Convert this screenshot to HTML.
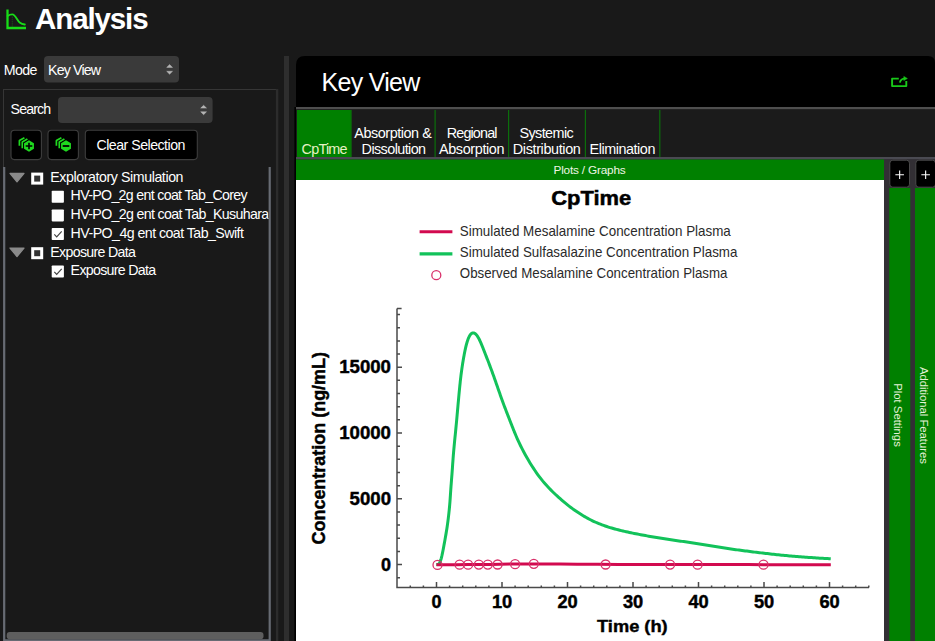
<!DOCTYPE html><html><head><meta charset="utf-8"><style>html,body{margin:0;padding:0;width:935px;height:641px;overflow:hidden;background:#191919}svg{display:block}text{font-family:"Liberation Sans",sans-serif;white-space:pre}</style></head><body>
<svg width="935" height="641" viewBox="0 0 935 641">
<rect width="935" height="641" fill="#191919"/>
<path d="M7.5 9.6 V28 H26" fill="none" stroke="#18dc18" stroke-width="2.3"/>
<path d="M7.6 16 C9 15 10.5 14.4 12.3 14.4 C15.5 14.4 17 20.5 20 22.8 C21.5 24 23 24.3 24.8 24.5" fill="none" stroke="#18dc18" stroke-width="1.9" stroke-linecap="round"/>
<path d="M12.3 16.5 V27" stroke="#14a014" stroke-width="1" stroke-dasharray="1.5 0.7" opacity="0.4"/>
<text x="35.1" y="29.2" font-size="29.5" fill="#fff" font-weight="bold" textLength="113.5" lengthAdjust="spacing" >Analysis</text>
<text x="3.75" y="75.0" font-size="14.2" fill="#fff" textLength="33.75" lengthAdjust="spacing" >Mode</text>
<rect x="44" y="56" width="135" height="26.5" rx="4" fill="#3a3a3a"/>
<text x="48.1" y="75.0" font-size="14.2" fill="#fff" textLength="52.9" lengthAdjust="spacing" >Key View</text>
<path d="M166.7 67.39999999999999 L169.6 64.6 L172.5 67.39999999999999 Z M166.7 71.3 L169.6 74.2 L172.5 71.3 Z" fill="#b4b4b4" stroke="#b4b4b4" stroke-width="0.5" stroke-linejoin="round"/>
<rect x="3.5" y="89.5" width="273.5" height="600" fill="none" stroke="#363636" stroke-width="1"/>
<rect x="275.9" y="89" width="2.4" height="552" fill="#2c2c2c"/>
<text x="10.6" y="114.2" font-size="14.2" fill="#fff" textLength="40.6" lengthAdjust="spacing" >Search</text>
<rect x="58" y="97" width="154.6" height="26" rx="4" fill="#3a3a3a"/>
<path d="M200.7 108.1 L203.6 105.3 L206.5 108.1 Z M200.7 111.8 L203.6 114.7 L206.5 111.8 Z" fill="#b4b4b4" stroke="#b4b4b4" stroke-width="0.5" stroke-linejoin="round"/>
<rect x="11" y="130.2" width="30.4" height="29.4" rx="3.5" fill="#000" stroke="#3e3e3e" stroke-width="1.1"/>
<rect x="48" y="130.2" width="30.4" height="29.4" rx="3.5" fill="#000" stroke="#3e3e3e" stroke-width="1.1"/>
<rect x="85.3" y="130.2" width="112" height="29.4" rx="3.5" fill="#000" stroke="#3e3e3e" stroke-width="1.1"/>
<text x="96.5" y="149.7" font-size="14.2" fill="#fff" textLength="88.9" lengthAdjust="spacing" >Clear Selection</text>
<polyline points="19.40,145.70 19.40,140.40 24.40,137.80" fill="none" stroke="#1fd81f" stroke-width="1.7" stroke-linejoin="bevel"/>
<polyline points="22.30,148.20 22.30,142.10 27.40,139.10" fill="none" stroke="#1fd81f" stroke-width="1.7" stroke-linejoin="bevel"/>
<polygon points="29.00,139.40 34.72,142.70 34.72,149.30 29.00,152.60 23.28,149.30 23.28,142.70" fill="#000"/>
<polygon points="29.00,140.30 33.94,143.15 33.94,148.85 29.00,151.70 24.06,148.85 24.06,143.15" fill="#1fd81f"/>
<path d="M25.7 146 H32.3 M29 142.7 V149.3" stroke="#000" stroke-width="1.6"/>
<polyline points="56.40,145.70 56.40,140.40 61.40,137.80" fill="none" stroke="#1fd81f" stroke-width="1.7" stroke-linejoin="bevel"/>
<polyline points="59.30,148.20 59.30,142.10 64.40,139.10" fill="none" stroke="#1fd81f" stroke-width="1.7" stroke-linejoin="bevel"/>
<polygon points="66.00,139.40 71.72,142.70 71.72,149.30 66.00,152.60 60.28,149.30 60.28,142.70" fill="#000"/>
<polygon points="66.00,140.30 70.94,143.15 70.94,148.85 66.00,151.70 61.06,148.85 61.06,143.15" fill="#1fd81f"/>
<path d="M62.7 146 H69.3" stroke="#000" stroke-width="1.8"/>
<path d="M4.2 167 V640.4 H269.7 V167" fill="none" stroke="#676b73" stroke-width="2.2"/>
<rect x="6.7" y="632" width="256.8" height="7.3" rx="3" fill="#5e5e5e"/>
<clipPath id="tc"><rect x="5" y="165" width="263.5" height="470"/></clipPath><g clip-path="url(#tc)">
<path d="M10 173.4 H24 L17 181.8 Z" fill="#8a8a8a" stroke="#8a8a8a" stroke-width="1.3" stroke-linejoin="round"/>
<rect x="31.2" y="172.6" width="12" height="12" fill="#fff"/><rect x="34.2" y="175.6" width="6" height="6" fill="#333"/>
<text x="50.3" y="182.3" font-size="14.2" fill="#fff" textLength="133.2" lengthAdjust="spacing" >Exploratory Simulation</text>
<rect x="51.7" y="190.7" width="12.2" height="12" rx="0.8" fill="#fff"/>
<text x="70.6" y="200.4" font-size="14.2" fill="#fff" textLength="177.0" lengthAdjust="spacing" >HV-PO_2g ent coat Tab_Corey</text>
<rect x="51.7" y="209.4" width="12.2" height="12" rx="0.8" fill="#fff"/>
<text x="70.6" y="219.1" font-size="14.2" fill="#fff" textLength="198.6" lengthAdjust="spacing" >HV-PO_2g ent coat Tab_Kusuhara</text>
<rect x="51.7" y="228.1" width="12.2" height="12" rx="0.8" fill="#fff"/>
<path d="M54.300000000000004 234.4 L56.7 236.9 L61.7 231.4" fill="none" stroke="#444" stroke-width="1.2"/>
<text x="70.6" y="237.8" font-size="14.2" fill="#fff" textLength="173.3" lengthAdjust="spacing" >HV-PO_4g ent coat Tab_Swift</text>
<path d="M10 248.1 H24 L17 256.5 Z" fill="#8a8a8a" stroke="#8a8a8a" stroke-width="1.3" stroke-linejoin="round"/>
<rect x="31.2" y="247.2" width="12" height="12" fill="#fff"/><rect x="34.2" y="250.2" width="6" height="6" fill="#333"/>
<text x="50.3" y="257.0" font-size="14.2" fill="#fff" textLength="85.6" lengthAdjust="spacing" >Exposure Data</text>
<rect x="51.7" y="265.5" width="12.2" height="12" rx="0.8" fill="#fff"/>
<path d="M54.300000000000004 271.8 L56.7 274.3 L61.7 268.8" fill="none" stroke="#444" stroke-width="1.2"/>
<text x="70.6" y="275.2" font-size="14.2" fill="#fff" textLength="85.6" lengthAdjust="spacing" >Exposure Data</text>
</g>
<rect x="284" y="56" width="5" height="585" fill="#2e2e2e"/>
<rect x="294.4" y="107" width="1.6" height="534" fill="#000"/>
<path d="M296 107 V65 Q296 56 305 56 H928 Q935 56 935 63 V107 Z" fill="#000"/>
<text x="321.6" y="91" font-size="25" fill="#fff" textLength="98.7" lengthAdjust="spacing" >Key View</text>
<path d="M898.8 78.6 H892.1 V86.1 H906.3 V80.9" fill="none" stroke="#19c819" stroke-width="1.9" stroke-linejoin="round"/>
<path d="M899.9 82.6 C900.3 80.3 901.8 79 904.2 78.7" fill="none" stroke="#19c819" stroke-width="1.8"/>
<path d="M903.8 76.4 L907.4 78.5 L903.8 80.6 Z" fill="#19c819" stroke="#19c819" stroke-width="0.5" stroke-linejoin="round"/>
<rect x="296" y="107" width="639" height="2.4" fill="#4e4e4e"/>
<rect x="296" y="109.4" width="639" height="47.6" fill="#1b1b1b"/>
<rect x="297" y="110" width="54" height="47" fill="#008000"/>
<rect x="350.5" y="110" width="1.2" height="47" fill="#0b6e0b"/>
<rect x="434.5" y="110" width="1.2" height="47" fill="#0b6e0b"/>
<rect x="508.0" y="110" width="1.2" height="47" fill="#0b6e0b"/>
<rect x="584.8" y="110" width="1.2" height="47" fill="#0b6e0b"/>
<rect x="659.2" y="110" width="1.2" height="47" fill="#0b6e0b"/>
<text x="301.5" y="153.8" font-size="14.4" fill="#e6f2c4" textLength="46.1" lengthAdjust="spacing" >CpTime</text>
<text x="354.3" y="137.6" font-size="14.4" fill="#fff" textLength="77.5" lengthAdjust="spacing" >Absorption &amp;</text>
<text x="361.6" y="153.9" font-size="14.4" fill="#fff" textLength="64.5" lengthAdjust="spacing" >Dissolution</text>
<text x="446.7" y="137.6" font-size="14.4" fill="#fff" textLength="50.8" lengthAdjust="spacing" >Regional</text>
<text x="439.0" y="153.9" font-size="14.4" fill="#fff" textLength="65.5" lengthAdjust="spacing" >Absorption</text>
<text x="519.4" y="137.6" font-size="14.4" fill="#fff" textLength="54.4" lengthAdjust="spacing" >Systemic</text>
<text x="512.8" y="153.9" font-size="14.4" fill="#fff" textLength="68.0" lengthAdjust="spacing" >Distribution</text>
<text x="589.6" y="153.9" font-size="14.4" fill="#fff" textLength="65.8" lengthAdjust="spacing" >Elimination</text>
<rect x="296" y="157" width="639" height="2.6" fill="#4a4a52"/>
<rect x="296" y="159.5" width="588" height="20.5" fill="#008000"/>
<text x="553.5" y="173.6" font-size="11.8" fill="#eef6e4" textLength="72.2" lengthAdjust="spacing" >Plots / Graphs</text>
<rect x="884" y="159.5" width="51" height="482" fill="#322f34"/>
<rect x="889.3" y="188" width="21" height="453" fill="#008000"/>
<rect x="915" y="188" width="20" height="453" fill="#008000"/>
<rect x="889.8" y="160.2" width="19.7" height="27" rx="3" fill="#000" stroke="#4a4a4a" stroke-width="1"/>
<path d="M895.35 174.7 H903.9499999999999 M899.65 170.4 V179" stroke="#fff" stroke-width="1.1"/>
<rect x="915.8" y="160.2" width="19.7" height="27" rx="3" fill="#000" stroke="#4a4a4a" stroke-width="1"/>
<path d="M921.35 174.7 H929.9499999999999 M925.65 170.4 V179" stroke="#fff" stroke-width="1.1"/>
<text transform="translate(894.2 383.2) rotate(90)" x="0" y="0" font-size="11.3" fill="#e6f2d8" textLength="63.6" lengthAdjust="spacing">Plot Settings</text>
<text transform="translate(919.6 366.9) rotate(90)" x="0" y="0" font-size="11.3" fill="#e6f2d8" textLength="97" lengthAdjust="spacing">Additional Features</text>
<rect x="296" y="180" width="588" height="461" fill="#fff"/>
<text x="551.2" y="205.2" font-family="Liberation Sans, sans-serif" font-weight="bold" font-size="20.5" fill="#000" stroke="#000" stroke-width="0.5" textLength="80" lengthAdjust="spacingAndGlyphs">CpTime</text>
<line x1="419.6" y1="231.8" x2="452.4" y2="231.8" stroke="#d20a4f" stroke-width="3"/>
<line x1="419.6" y1="253.8" x2="452.4" y2="253.8" stroke="#12c25a" stroke-width="3.2"/>
<circle cx="436.3" cy="275.2" r="4.5" fill="none" stroke="#d9306a" stroke-width="1.3"/>
<text x="459.8" y="235.6" font-family="Liberation Sans, sans-serif" font-size="15" fill="#2a2a2a" textLength="271" lengthAdjust="spacingAndGlyphs">Simulated Mesalamine Concentration Plasma</text>
<text x="459.8" y="257.0" font-family="Liberation Sans, sans-serif" font-size="15" fill="#2a2a2a" textLength="277.6" lengthAdjust="spacingAndGlyphs">Simulated Sulfasalazine Concentration Plasma</text>
<text x="459.8" y="278.4" font-family="Liberation Sans, sans-serif" font-size="15" fill="#2a2a2a" textLength="267.7" lengthAdjust="spacingAndGlyphs">Observed Mesalamine Concentration Plasma</text>
<path d="M397 308.4 V587.5 H869" fill="none" stroke="#4a4a4a" stroke-width="1.5"/>
<path d="M397 577.76 h3 M397 564.60 h5 M397 551.44 h3 M397 538.28 h3 M397 525.12 h3 M397 511.96 h3 M397 498.80 h5 M397 485.64 h3 M397 472.48 h3 M397 459.32 h3 M397 446.16 h3 M397 433.00 h5 M397 419.84 h3 M397 406.68 h3 M397 393.52 h3 M397 380.36 h3 M397 367.20 h5 M397 354.04 h3 M397 340.88 h3 M397 327.72 h3 M397 314.56 h3 M397 308.4 h4.6 M410.30 587.5 v-2 M423.40 587.5 v-2 M436.50 587.5 v-5.5 M449.60 587.5 v-2 M462.70 587.5 v-2 M475.80 587.5 v-2 M488.90 587.5 v-2 M502.00 587.5 v-5.5 M515.10 587.5 v-2 M528.20 587.5 v-2 M541.30 587.5 v-2 M554.40 587.5 v-2 M567.50 587.5 v-5.5 M580.60 587.5 v-2 M593.70 587.5 v-2 M606.80 587.5 v-2 M619.90 587.5 v-2 M633.00 587.5 v-5.5 M646.10 587.5 v-2 M659.20 587.5 v-2 M672.30 587.5 v-2 M685.40 587.5 v-2 M698.50 587.5 v-5.5 M711.60 587.5 v-2 M724.70 587.5 v-2 M737.80 587.5 v-2 M750.90 587.5 v-2 M764.00 587.5 v-5.5 M777.10 587.5 v-2 M790.20 587.5 v-2 M803.30 587.5 v-2 M816.40 587.5 v-2 M829.50 587.5 v-5.5 M842.60 587.5 v-2 M855.70 587.5 v-2 M868.80 587.5 v-2" fill="none" stroke="#4a4a4a" stroke-width="1.5"/>
<text x="381.0" y="570.7" font-family="Liberation Sans, sans-serif" font-weight="bold" font-size="18.6" fill="#000" stroke="#000" stroke-width="0.45" textLength="10" lengthAdjust="spacingAndGlyphs">0</text>
<text x="349.6" y="504.9" font-family="Liberation Sans, sans-serif" font-weight="bold" font-size="18.6" fill="#000" stroke="#000" stroke-width="0.45" textLength="41.4" lengthAdjust="spacingAndGlyphs">5000</text>
<text x="339.2" y="439.1" font-family="Liberation Sans, sans-serif" font-weight="bold" font-size="18.6" fill="#000" stroke="#000" stroke-width="0.45" textLength="51.8" lengthAdjust="spacingAndGlyphs">10000</text>
<text x="339.2" y="373.3" font-family="Liberation Sans, sans-serif" font-weight="bold" font-size="18.6" fill="#000" stroke="#000" stroke-width="0.45" textLength="51.8" lengthAdjust="spacingAndGlyphs">15000</text>
<text x="431.5" y="607.8" font-family="Liberation Sans, sans-serif" font-weight="bold" font-size="18.6" fill="#000" stroke="#000" stroke-width="0.45" textLength="10" lengthAdjust="spacingAndGlyphs">0</text>
<text x="491.9" y="607.8" font-family="Liberation Sans, sans-serif" font-weight="bold" font-size="18.6" fill="#000" stroke="#000" stroke-width="0.45" textLength="20.3" lengthAdjust="spacingAndGlyphs">10</text>
<text x="557.4" y="607.8" font-family="Liberation Sans, sans-serif" font-weight="bold" font-size="18.6" fill="#000" stroke="#000" stroke-width="0.45" textLength="20.3" lengthAdjust="spacingAndGlyphs">20</text>
<text x="622.9" y="607.8" font-family="Liberation Sans, sans-serif" font-weight="bold" font-size="18.6" fill="#000" stroke="#000" stroke-width="0.45" textLength="20.3" lengthAdjust="spacingAndGlyphs">30</text>
<text x="688.4" y="607.8" font-family="Liberation Sans, sans-serif" font-weight="bold" font-size="18.6" fill="#000" stroke="#000" stroke-width="0.45" textLength="20.3" lengthAdjust="spacingAndGlyphs">40</text>
<text x="753.9" y="607.8" font-family="Liberation Sans, sans-serif" font-weight="bold" font-size="18.6" fill="#000" stroke="#000" stroke-width="0.45" textLength="20.3" lengthAdjust="spacingAndGlyphs">50</text>
<text x="819.4" y="607.8" font-family="Liberation Sans, sans-serif" font-weight="bold" font-size="18.6" fill="#000" stroke="#000" stroke-width="0.45" textLength="20.3" lengthAdjust="spacingAndGlyphs">60</text>
<text x="597" y="631.8" font-family="Liberation Sans, sans-serif" font-weight="bold" font-size="17" fill="#000" stroke="#000" stroke-width="0.4" textLength="70.7" lengthAdjust="spacingAndGlyphs">Time (h)</text>
<text x="0" y="0" transform="translate(324.6 544.5) rotate(-90)" font-family="Liberation Sans, sans-serif" font-weight="bold" font-size="18" fill="#000" stroke="#000" stroke-width="0.45" textLength="192.5" lengthAdjust="spacingAndGlyphs">Concentration (ng/mL)</text>
<path d="M436.29 564.56 L436.55 564.56 L436.81 564.56 L437.07 564.55 L437.33 564.52 L437.59 564.48 L437.85 564.41 L438.11 564.31 L438.38 564.17 L438.64 563.99 L438.90 563.75 L439.16 563.45 L439.42 563.08 L439.68 562.65 L439.94 562.14 L440.20 561.55 L440.46 560.87 L440.73 560.12 L440.99 559.27 L441.26 558.33 L441.52 557.30 L441.80 556.18 L442.07 554.96 L442.35 553.65 L442.64 552.25 L442.94 550.75 L443.24 549.17 L443.56 547.49 L443.88 545.72 L444.22 543.87 L444.58 541.93 L444.94 539.91 L445.32 537.81 L445.70 535.63 L446.09 533.37 L446.47 531.04 L446.86 528.64 L447.23 526.17 L447.59 523.63 L447.95 521.03 L448.28 518.37 L448.60 515.66 L448.91 512.90 L449.20 510.09 L449.48 507.24 L449.74 504.34 L449.98 501.42 L450.19 498.46 L450.39 495.47 L450.59 492.46 L450.79 489.42 L451.01 486.37 L451.25 483.30 L451.49 480.22 L451.73 477.13 L451.97 474.03 L452.20 470.93 L452.43 467.83 L452.64 464.72 L452.86 461.63 L453.08 458.54 L453.32 455.47 L453.58 452.41 L453.84 449.37 L454.12 446.36 L454.40 443.36 L454.69 440.39 L454.98 437.45 L455.28 434.53 L455.57 431.64 L455.85 428.77 L456.12 425.94 L456.39 423.13 L456.65 420.36 L456.90 417.62 L457.14 414.91 L457.38 412.25 L457.61 409.62 L457.84 407.03 L458.07 404.48 L458.30 401.98 L458.52 399.52 L458.74 397.10 L458.96 394.72 L459.18 392.39 L459.40 390.11 L459.62 387.87 L459.84 385.68 L460.06 383.53 L460.28 381.43 L460.51 379.38 L460.75 377.38 L460.98 375.42 L461.22 373.52 L461.47 371.66 L461.72 369.85 L461.97 368.08 L462.22 366.37 L462.47 364.70 L462.73 363.08 L462.99 361.51 L463.24 359.98 L463.50 358.50 L463.75 357.06 L464.01 355.67 L464.26 354.33 L464.51 353.03 L464.76 351.78 L465.01 350.57 L465.26 349.41 L465.50 348.29 L465.75 347.21 L466.00 346.18 L466.24 345.20 L466.49 344.25 L466.73 343.35 L466.98 342.49 L467.22 341.67 L467.47 340.89 L467.72 340.16 L467.96 339.46 L468.21 338.80 L468.46 338.18 L468.71 337.60 L468.96 337.06 L469.21 336.55 L469.46 336.08 L469.71 335.64 L469.96 335.24 L470.21 334.87 L470.47 334.54 L470.72 334.24 L470.97 333.97 L471.23 333.73 L471.48 333.53 L471.73 333.35 L471.99 333.21 L472.25 333.09 L472.50 333.00 L472.76 332.94 L473.01 332.91 L473.27 332.90 L473.53 332.93 L473.78 332.97 L474.04 333.05 L474.29 333.14 L474.55 333.26 L474.80 333.41 L475.06 333.58 L475.31 333.77 L475.56 333.98 L475.82 334.22 L476.07 334.47 L476.32 334.75 L476.57 335.05 L476.83 335.36 L477.08 335.70 L477.33 336.05 L477.58 336.43 L477.83 336.82 L478.08 337.22 L478.32 337.65 L478.57 338.09 L478.82 338.54 L479.07 339.02 L479.32 339.50 L479.56 340.01 L479.81 340.52 L480.06 341.05 L480.31 341.59 L480.55 342.15 L480.80 342.71 L481.05 343.29 L481.30 343.88 L481.55 344.48 L481.80 345.09 L482.05 345.71 L482.31 346.34 L482.56 346.98 L482.82 347.62 L483.08 348.28 L483.34 348.94 L483.60 349.61 L483.86 350.29 L484.13 350.97 L484.40 351.66 L484.67 352.35 L484.94 353.05 L485.21 353.76 L485.49 354.47 L485.77 355.18 L486.05 355.90 L486.33 356.63 L486.62 357.36 L486.90 358.09 L487.19 358.83 L487.48 359.57 L487.77 360.31 L488.06 361.06 L488.35 361.81 L488.64 362.57 L488.93 363.33 L489.23 364.09 L489.52 364.85 L489.81 365.62 L490.10 366.39 L490.39 367.16 L490.68 367.93 L490.97 368.71 L491.26 369.49 L491.55 370.27 L491.84 371.05 L492.13 371.84 L492.41 372.62 L492.70 373.41 L492.98 374.20 L493.27 374.98 L493.55 375.77 L493.83 376.56 L494.11 377.35 L494.39 378.15 L494.67 378.94 L494.95 379.73 L495.23 380.52 L495.51 381.31 L495.78 382.10 L496.06 382.89 L496.34 383.68 L496.61 384.47 L496.89 385.26 L497.16 386.05 L497.44 386.84 L497.71 387.62 L497.98 388.41 L498.26 389.19 L498.53 389.97 L498.80 390.76 L499.07 391.53 L499.34 392.31 L499.62 393.09 L499.89 393.86 L500.16 394.63 L500.43 395.40 L500.70 396.17 L500.97 396.94 L501.25 397.70 L501.52 398.46 L501.79 399.22 L502.06 399.97 L502.34 400.73 L502.61 401.48 L502.88 402.23 L503.16 402.97 L503.43 403.71 L503.71 404.45 L503.98 405.19 L504.26 405.92 L504.53 406.65 L504.81 407.38 L505.08 408.11 L505.36 408.83 L505.64 409.55 L505.91 410.26 L506.19 410.98 L506.46 411.69 L506.73 412.40 L507.01 413.10 L507.28 413.80 L507.55 414.50 L507.82 415.20 L508.09 415.90 L508.36 416.59 L508.63 417.28 L508.90 417.96 L509.16 418.64 L509.43 419.32 L509.69 420.00 L509.95 420.68 L510.22 421.35 L510.48 422.02 L510.74 422.68 L511.00 423.35 L511.25 424.01 L511.51 424.66 L511.77 425.32 L512.02 425.97 L512.28 426.62 L512.53 427.26 L512.79 427.90 L513.04 428.54 L513.29 429.18 L513.55 429.81 L513.80 430.44 L514.05 431.06 L514.30 431.68 L514.56 432.30 L514.81 432.92 L515.06 433.53 L515.31 434.14 L515.57 434.75 L515.88 435.49 L517.43 439.04 L518.99 442.46 L520.58 445.76 L522.18 448.93 L523.79 451.98 L525.40 454.92 L527.01 457.76 L528.61 460.50 L530.19 463.15 L531.78 465.70 L533.35 468.17 L534.93 470.54 L536.50 472.83 L538.08 475.03 L539.66 477.15 L541.24 479.19 L542.82 481.15 L544.41 483.03 L546.01 484.84 L547.60 486.58 L549.19 488.26 L550.79 489.88 L552.37 491.46 L553.95 492.99 L555.52 494.48 L557.09 495.93 L558.64 497.35 L560.19 498.73 L561.73 500.08 L563.26 501.39 L564.79 502.68 L566.32 503.93 L567.84 505.14 L569.37 506.33 L570.90 507.48 L572.43 508.60 L573.96 509.69 L575.49 510.76 L577.03 511.80 L578.56 512.82 L580.10 513.82 L581.63 514.79 L583.17 515.73 L584.71 516.65 L586.26 517.54 L587.81 518.40 L589.37 519.23 L590.93 520.03 L592.50 520.80 L594.08 521.54 L595.66 522.25 L597.24 522.93 L598.83 523.59 L600.42 524.23 L602.02 524.84 L603.62 525.43 L605.22 525.99 L606.83 526.54 L608.44 527.06 L610.05 527.56 L611.66 528.05 L613.27 528.52 L614.88 528.96 L616.50 529.40 L618.11 529.82 L619.73 530.22 L621.34 530.62 L622.96 531.00 L624.57 531.37 L626.19 531.74 L627.80 532.09 L629.41 532.44 L631.02 532.78 L632.63 533.11 L634.24 533.44 L635.85 533.76 L637.46 534.08 L639.06 534.39 L640.66 534.70 L642.27 535.00 L643.87 535.31 L645.47 535.60 L647.07 535.89 L648.66 536.18 L650.26 536.47 L651.86 536.75 L653.45 537.02 L655.05 537.29 L656.65 537.56 L658.24 537.82 L659.83 538.08 L661.43 538.34 L663.02 538.59 L664.61 538.84 L666.21 539.08 L667.80 539.32 L669.39 539.56 L670.98 539.79 L672.58 540.02 L674.17 540.25 L675.76 540.48 L677.35 540.71 L678.94 540.93 L680.53 541.15 L682.11 541.37 L683.70 541.58 L685.29 541.80 L686.87 542.02 L688.46 542.24 L690.04 542.46 L691.62 542.69 L693.21 542.92 L694.79 543.16 L696.37 543.41 L697.95 543.66 L699.52 543.91 L701.10 544.17 L702.68 544.43 L704.26 544.69 L705.83 544.95 L707.41 545.21 L708.99 545.47 L710.56 545.73 L712.14 545.99 L713.71 546.25 L715.29 546.51 L716.87 546.77 L718.44 547.03 L720.02 547.28 L721.59 547.54 L723.16 547.79 L724.74 548.05 L726.31 548.30 L727.89 548.54 L729.47 548.78 L731.04 549.01 L732.62 549.23 L734.20 549.45 L735.78 549.66 L737.36 549.87 L738.94 550.08 L740.52 550.29 L742.10 550.49 L743.68 550.70 L745.26 550.91 L746.84 551.11 L748.42 551.32 L749.99 551.53 L751.57 551.73 L753.15 551.94 L754.73 552.13 L756.31 552.33 L757.90 552.52 L759.48 552.70 L761.06 552.88 L762.64 553.06 L764.22 553.24 L765.80 553.42 L767.38 553.60 L768.96 553.78 L770.55 553.96 L772.13 554.14 L773.71 554.32 L775.29 554.50 L776.87 554.67 L778.45 554.84 L780.04 555.00 L781.62 555.16 L783.20 555.31 L784.78 555.46 L786.37 555.61 L787.95 555.75 L789.53 555.89 L791.12 556.03 L792.70 556.16 L794.29 556.30 L795.87 556.43 L797.45 556.56 L799.04 556.69 L800.62 556.82 L802.21 556.94 L803.79 557.06 L805.38 557.18 L806.96 557.29 L808.55 557.41 L810.13 557.52 L811.72 557.62 L813.30 557.73 L814.89 557.83 L816.47 557.94 L818.06 558.04 L819.64 558.14 L821.23 558.24 L822.81 558.33 L824.40 558.43 L825.98 558.52 L827.57 558.61 L829.15 558.70 L830.74 558.79" fill="none" stroke="#12c25a" stroke-width="3" stroke-linejoin="round" stroke-linecap="butt"/>
<path d="M436.5 564.8 L444.4 564.8 L455.8 564.7 L468.4 564.6 L480.0 564.5 L490.2 564.4 L500.2 564.2 L510.1 564.1 L520.0 564.0 L529.1 564.0 L537.5 564.0 L547.2 564.0 L560.0 564.1 L577.2 564.2 L597.5 564.3 L619.1 564.4 L640.0 564.5 L659.3 564.5 L678.1 564.6 L697.8 564.6 L720.0 564.6 L748.1 564.6 L780.4 564.7 L810.2 564.7 L830.8 564.7" fill="none" stroke="#d20a4f" stroke-width="3"/>
<circle cx="437.5" cy="564.9" r="4.5" fill="none" stroke="#d9306a" stroke-width="1.3"/>
<circle cx="459.6" cy="564.7" r="4.5" fill="none" stroke="#d9306a" stroke-width="1.3"/>
<circle cx="468.1" cy="564.7" r="4.5" fill="none" stroke="#d9306a" stroke-width="1.3"/>
<circle cx="478.8" cy="564.6" r="4.5" fill="none" stroke="#d9306a" stroke-width="1.3"/>
<circle cx="487.8" cy="564.6" r="4.5" fill="none" stroke="#d9306a" stroke-width="1.3"/>
<circle cx="497.6" cy="564.5" r="4.5" fill="none" stroke="#d9306a" stroke-width="1.3"/>
<circle cx="515.1" cy="564.2" r="4.5" fill="none" stroke="#d9306a" stroke-width="1.3"/>
<circle cx="533.8" cy="563.8" r="4.5" fill="none" stroke="#d9306a" stroke-width="1.3"/>
<circle cx="605.6" cy="564.5" r="4.5" fill="none" stroke="#d9306a" stroke-width="1.3"/>
<circle cx="670.1" cy="564.6" r="4.5" fill="none" stroke="#d9306a" stroke-width="1.3"/>
<circle cx="697.6" cy="564.7" r="4.5" fill="none" stroke="#d9306a" stroke-width="1.3"/>
<circle cx="763.5" cy="564.7" r="4.5" fill="none" stroke="#d9306a" stroke-width="1.3"/>
</svg></body></html>
